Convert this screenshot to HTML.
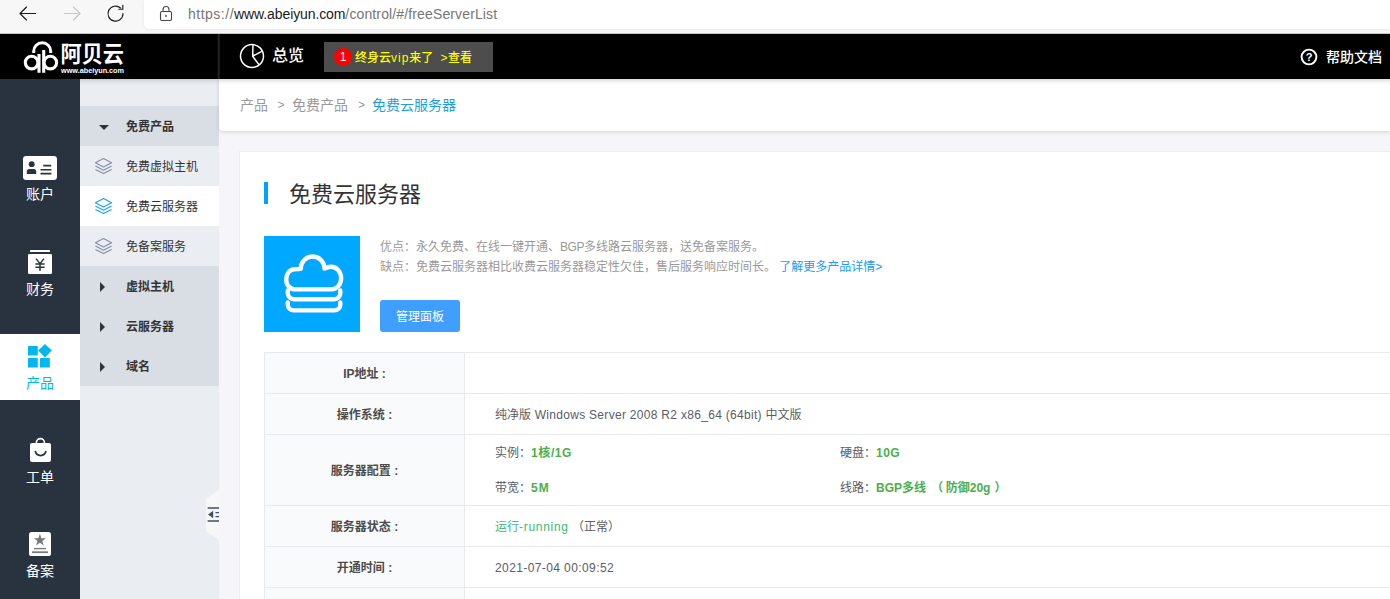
<!DOCTYPE html>
<html lang="zh-CN">
<head>
<meta charset="utf-8">
<title>免费云服务器</title>
<style>
*{box-sizing:border-box;margin:0;padding:0}
html,body{width:1390px;height:599px;overflow:hidden;background:#f5f5fa;
  font-family:"Liberation Sans","Noto Sans CJK SC",sans-serif;color:#333}
body{position:relative}
.abs{position:absolute}
/* browser chrome */
#chrome{left:0;top:0;width:1390px;height:34px;background:#f7f7f7;border-bottom:1px solid #c4c4c4}
#addr{left:144px;top:0;width:1246px;height:29px;background:#fff;border-bottom-left-radius:5px;box-shadow:0 1px 3px rgba(0,0,0,.06)}
#url{left:188px;top:5px;font-size:14px;line-height:18px;color:#767676;white-space:nowrap;letter-spacing:0px}
#url b{font-weight:normal;color:#1a1a1a}
/* header */
#header{left:0;top:34px;width:1390px;height:45px;background:#000}
#hsep{left:217px;top:34px;width:3px;height:45px;background:linear-gradient(90deg,#000,#2a2a2a 60%,#111)}
#ov{left:272px;top:45px;font-size:16px;line-height:22px;color:#fff;white-space:nowrap;font-weight:500}
#notice{left:324px;top:42px;width:169px;height:30px;background:#4d4d4d}
#badge{left:334px;top:48px;width:18px;height:18px;border-radius:9px;background:#f00;color:#fff;font-size:12px;line-height:18px;text-align:center}
#ntext{left:355px;top:49px;font-size:12px;line-height:18px;color:#ffff00;white-space:nowrap;font-weight:500}
#help{left:1326px;top:47px;font-size:14px;line-height:20px;color:#fff;white-space:nowrap;font-weight:500}
/* left dark sidebar */
#side{left:0;top:79px;width:80px;height:520px;background:#29323f}
.sitem{left:0;width:80px;text-align:center;color:#fff;font-size:14px;line-height:18px}
#sactive{left:0;top:334px;width:80px;height:66px;background:#fff}
/* sub sidebar */
#sub{left:80px;top:79px;width:139px;height:520px;background:#eaedf1}
.srow{left:80px;width:139px;height:40px;font-size:12px;line-height:43px;color:#333;white-space:nowrap}
.srow.h{background:#d9dee4;font-weight:bold}
.srow.h span{position:absolute;left:46px;top:0}
.srow.i span{position:absolute;left:46px;top:0}
.srow.on{background:#fff}
.tri-d{position:absolute;left:18.5px;top:18.5px;width:0;height:0;border-left:5px solid transparent;border-right:5px solid transparent;border-top:5.5px solid #333}
.tri-r{position:absolute;left:20px;top:15.5px;width:0;height:0;border-top:5px solid transparent;border-bottom:5px solid transparent;border-left:5px solid #333}
/* breadcrumb */
#crumb{left:219px;top:79px;width:1171px;height:52px;background:#fff;box-shadow:0 1px 4px rgba(0,0,0,.14);border-bottom-left-radius:4px}
#crumbt{left:240px;top:95px;font-size:14px;line-height:20px;color:#999;white-space:nowrap}
#crumbt em{font-style:normal;color:#1e9fd8}
#crumbt .gt{position:absolute;font-size:12px}
/* card */
#card{left:239px;top:151px;width:1151px;height:448px;background:#fff;border-left:1px solid #ebebf0;border-top:1px solid #ebebf0}
#tbar{left:264px;top:182px;width:4px;height:22px;background:#00a2fd}
#title{left:289px;top:180px;font-size:22px;line-height:30px;color:#333;white-space:nowrap}
#pic{left:264px;top:236px;width:96px;height:96px;background:#00a8ff}
.desc{left:380px;font-size:12px;line-height:18px;color:#999;white-space:nowrap}
.desc a{color:#1a9af8;text-decoration:none}
#btn{left:380px;top:300px;width:80px;height:32px;background:#409eff;border-radius:3px;color:#fff;font-size:12px;line-height:34px;text-align:center}
/* table */
.hl{left:264px;width:1126px;height:1px;background:#e9eaee}
#lcol{left:264px;top:353px;width:200px;height:246px;background:#f9fafb;border-left:1px solid #e9eaee}
#vl{left:464px;top:353px;width:1px;height:246px;background:#e9eaee}
.lab{left:265px;width:199px;text-align:center;font-size:12px;line-height:18px;font-weight:bold;color:#4c4c4c;white-space:nowrap}
.val{font-size:12px;line-height:18px;color:#595d66;white-space:nowrap}
.val b{color:#4cae4c}
.g{color:#3cb878}
</style>
</head>
<body>
<!-- browser chrome -->
<div id="chrome" class="abs"></div>
<div id="addr" class="abs"></div>
<svg class="abs" style="left:0;top:0" width="200" height="33" viewBox="0 0 200 33" fill="none" stroke-linecap="round" stroke-linejoin="round">
  <g stroke="#1b1b1b" stroke-width="1.15">
    <path d="M20.5 13.5H35.5M26.5 7L20 13.5L26.5 20"/>
  </g>
  <g stroke="#c6c6c6" stroke-width="1.15">
    <path d="M64.5 13.5H79.5M73.5 7L80 13.5L73.5 20"/>
  </g>
  <g stroke="#1b1b1b" stroke-width="1.15">
    <path d="M123 13.5A7.5 7.5 0 1 1 120.5 8"/>
    <path d="M122.8 5.2V9.2H118.8"/>
  </g>
  <g stroke="#444" stroke-width="1.1">
    <rect x="160.5" y="11.5" width="11" height="9" rx="1.5"/>
    <path d="M163 11.5V9.5a3 3 0 0 1 6 0V11.5"/>
  </g>
  <circle cx="166" cy="16" r="0.9" fill="#444"/>
</svg>
<div id="url" class="abs"><span style="letter-spacing:.5px">https://</span><b style="letter-spacing:-.1px">www.abeiyun.com</b><span style="letter-spacing:.13px">/control/#/freeServerList</span></div>

<!-- header -->
<div id="header" class="abs"></div>
<div id="hsep" class="abs"></div>
<svg class="abs" style="left:0;top:33px" width="217" height="46" viewBox="0 33 217 46" fill="none">
  <g stroke="#fff" stroke-width="3.1">
    <circle cx="31.6" cy="62.6" r="6.3"/>
    <circle cx="50.3" cy="62.6" r="6.3"/>
    <path d="M39 54V72.8M43.7 50V72.8"/>
    <path d="M33.7 53V51.3A8.5 8.5 0 0 1 50.7 51.3V53" stroke-width="3"/>
  </g>
  <text x="60.5" y="62.3" font-family="'Liberation Sans','Noto Sans CJK SC',sans-serif" font-size="22.5" font-weight="700" fill="#fff" textLength="63.5" lengthAdjust="spacingAndGlyphs">阿贝云</text>
  <text x="61" y="72.8" font-family="'Liberation Sans',sans-serif" font-size="6.6" font-weight="bold" fill="#fff" textLength="63" lengthAdjust="spacingAndGlyphs">www.abeiyun.com</text>
</svg>
<svg class="abs" style="left:236px;top:40px" width="32" height="32" viewBox="236 40 32 32" fill="none" stroke="#fff" stroke-width="1.5" stroke-linejoin="round">
  <circle cx="252" cy="56" r="11.5"/>
  <path d="M253 44.5L252.7 56.2L261.8 51.4M252.7 56.2L258.9 64.6"/>
</svg>
<div id="ov" class="abs">总览</div>
<div id="notice" class="abs"></div>
<div id="badge" class="abs">1</div>
<div id="ntext" class="abs">终身云<span style="letter-spacing:1px">vip</span>来了<span style="position:absolute;left:85.5px">&gt;</span><span style="position:absolute;left:93px">查看</span></div>
<svg class="abs" style="left:1300px;top:48px" width="18" height="18" viewBox="0 0 18 18" fill="none">
  <circle cx="9" cy="9" r="7.4" stroke="#fff" stroke-width="1.9"/>
  <text x="9" y="13" text-anchor="middle" font-family="'Liberation Sans',sans-serif" font-size="11" font-weight="bold" fill="#fff">?</text>
</svg>
<div id="help" class="abs">帮助文档</div>

<!-- dark sidebar -->
<div id="side" class="abs"></div>
<div id="sactive" class="abs"></div>
<svg class="abs" style="left:0;top:140px" width="80" height="459" viewBox="0 140 80 459" fill="none">
  <!-- account -->
  <rect x="23" y="156" width="34" height="24" rx="3.2" fill="#fff"/>
  <circle cx="31.7" cy="164.2" r="2.9" fill="#29323f"/>
  <path d="M26.8 174V171.6A2.6 2.6 0 0 1 29.4 169H33.6A2.6 2.6 0 0 1 36.2 171.6V174Z" fill="#29323f"/>
  <path d="M43.3 165.6H51.2M40.5 169.7H51.4M40.5 173.6H51.4" stroke="#29323f" stroke-width="1.6"/>
  <!-- finance -->
  <rect x="30" y="250" width="20" height="2" rx="0.5" fill="#fff"/>
  <rect x="28" y="254" width="24" height="20" rx="1.2" fill="#fff"/>
  <path d="M36 258.6L40 263.6L44 258.6M40 263.6V270.8M35.4 264H44.6M35.4 267.2H44.6" stroke="#29323f" stroke-width="1.5"/>
  <!-- product -->
  <rect x="28" y="346" width="9.8" height="9.6" rx="0.6" fill="#00b7ee"/>
  <rect x="28" y="358" width="9.8" height="9.6" rx="0.6" fill="#00b7ee"/>
  <rect x="40" y="358" width="9.8" height="9.6" rx="0.6" fill="#00b7ee"/>
  <path d="M45 343.9L51.8 350.6L45 357.4L38.2 350.6Z" fill="#00b7ee"/>
  <!-- ticket -->
  <rect x="30" y="443" width="21" height="19" rx="2" fill="#fff"/>
  <path d="M36.4 444V442.6A4 4 0 0 1 44.4 442.6V444" stroke="#fff" stroke-width="1.6"/>
  <path d="M35.4 451.6A5.4 5.4 0 0 0 45.8 451.6" stroke="#29323f" stroke-width="1.8" stroke-linecap="round"/>
  <!-- record -->
  <rect x="29" y="532" width="22" height="24" rx="2.6" fill="#fff"/>
  <path d="M39.9 533.8L41.4 538.2H46L42.3 541L43.7 545.5L39.9 542.8L36.1 545.5L37.5 541L33.8 538.2H38.4Z" fill="#7a7a7a"/>
  <path d="M34 548.6H46" stroke="#7a7a7a" stroke-width="1.4"/>
  <path d="M32 552.2H48" stroke="#7a7a7a" stroke-width="1.8"/>
</svg>
<div class="abs sitem" style="top:185px">账户</div>
<div class="abs sitem" style="top:280px">财务</div>
<div class="abs sitem" style="top:374px;color:#00b7ee">产品</div>
<div class="abs sitem" style="top:468px">工单</div>
<div class="abs sitem" style="top:562px">备案</div>

<!-- sub sidebar -->
<div id="sub" class="abs"></div>
<div class="abs srow h" style="top:106px"><i class="tri-d"></i><span>免费产品</span></div>
<div class="abs srow i" style="top:146px"><span>免费虚拟主机</span></div>
<div class="abs srow i on" style="top:186px"><span>免费云服务器</span></div>
<div class="abs srow i" style="top:226px"><span>免备案服务</span></div>
<svg class="abs" style="left:94px;top:156.5px" width="19" height="19" viewBox="0 0 19 19" fill="none" stroke="#8291a5" stroke-width="1.15" stroke-linejoin="round"><path d="M9.5 1.5L17.6 5.7L9.5 9.9L1.4 5.7Z"/><path d="M1.4 9.1L9.5 13.3L17.6 9.1"/><path d="M1.4 12.4L9.5 16.6L17.6 12.4"/></svg>
<svg class="abs" style="left:94px;top:196.5px" width="19" height="19" viewBox="0 0 19 19" fill="none" stroke="#1ca1f2" stroke-width="1.15" stroke-linejoin="round"><path d="M9.5 1.5L17.6 5.7L9.5 9.9L1.4 5.7Z"/><path d="M1.4 9.1L9.5 13.3L17.6 9.1"/><path d="M1.4 12.4L9.5 16.6L17.6 12.4"/></svg>
<svg class="abs" style="left:94px;top:236.5px" width="19" height="19" viewBox="0 0 19 19" fill="none" stroke="#8291a5" stroke-width="1.15" stroke-linejoin="round"><path d="M9.5 1.5L17.6 5.7L9.5 9.9L1.4 5.7Z"/><path d="M1.4 9.1L9.5 13.3L17.6 9.1"/><path d="M1.4 12.4L9.5 16.6L17.6 12.4"/></svg>
<div class="abs srow h" style="top:266px"><i class="tri-r"></i><span>虚拟主机</span></div>
<div class="abs srow h" style="top:306px"><i class="tri-r"></i><span>云服务器</span></div>
<div class="abs srow h" style="top:346px"><i class="tri-r"></i><span>域名</span></div>

<svg class="abs" style="left:200px;top:485px" width="19" height="60" viewBox="200 485 19 60" fill="none">
  <path d="M219 490L206 499V531L219 540Z" fill="#f7f7f8"/>
  <path d="M207.6 508H219M207.6 521H219" stroke="#435069" stroke-width="1.6"/>
  <path d="M215.5 512.6H219M215.5 516.6H219" stroke="#435069" stroke-width="1.4"/>
  <path d="M213.2 510.8V518.2L208 514.5Z" fill="#435069"/>
</svg>
<!-- breadcrumb -->
<div id="crumb" class="abs"></div>
<div class="abs" style="left:80px;top:79px;width:1310px;height:6px;background:linear-gradient(rgba(0,0,0,.13),rgba(0,0,0,.04) 55%,rgba(0,0,0,0))"></div>
<div id="crumbt" class="abs">产品<span class="gt" style="left:37.5px">&gt;</span><span style="position:absolute;left:52px">免费产品</span><span class="gt" style="left:118px">&gt;</span><em style="position:absolute;left:132px">免费云服务器</em></div>

<!-- card -->
<div id="card" class="abs"></div>
<div id="tbar" class="abs"></div>
<div id="title" class="abs">免费云服务器</div>
<div id="pic" class="abs"></div>
<svg class="abs" style="left:264px;top:236px" width="96" height="96" viewBox="0 0 96 96" fill="none" stroke="#fff" stroke-width="4.4" stroke-linejoin="round" stroke-linecap="round">
  <path d="M31 53.4C26 53.4 22.2 49 22.2 43.4C22.2 37.6 26 33.2 30.5 33.2C32.8 33.2 34.8 33.2 36.7 32.8A11.9 12.2 0 0 1 60.5 32.6C62.6 31.4 64.8 30.8 67.2 30.8C72.6 30.8 77.1 36 77.1 42.3C77.1 48.5 72.8 53.4 67.5 53.4Z"/>
  <path d="M23.8 54.5V57.2A6 6 0 0 0 29.8 63.2H70.3A6 6 0 0 0 76.3 57.2V54.5"/>
  <path d="M23.8 66.5V68.4A6 6 0 0 0 29.8 74.4H70.3A6 6 0 0 0 76.3 68.4V66.5"/>
</svg>
<div class="abs desc" style="top:238px">优点：永久免费、在线一键开通、<span style="letter-spacing:-.45px">BGP</span>多线路云服务器，送免备案服务。</div>
<div class="abs desc" style="top:258px">缺点：免费云服务器相比收费云服务器稳定性欠佳，售后服务响应时间长。 <a>了解更多产品详情&gt;</a></div>
<div id="btn" class="abs">管理面板</div>

<!-- table -->
<div id="lcol" class="abs"></div>
<div id="vl" class="abs"></div>
<div class="abs hl" style="top:352px"></div>
<div class="abs hl" style="top:393px"></div>
<div class="abs hl" style="top:434px"></div>
<div class="abs hl" style="top:505px"></div>
<div class="abs hl" style="top:546px"></div>
<div class="abs hl" style="top:587px"></div>
<div class="abs lab" style="top:365px">IP地址 :</div>
<div class="abs lab" style="top:406px">操作系统 :</div>
<div class="abs lab" style="top:462px">服务器配置 :</div>
<div class="abs lab" style="top:518px">服务器状态 :</div>
<div class="abs lab" style="top:559px">开通时间 :</div>
<div class="abs val" style="left:495px;top:406px">纯净版<span style="letter-spacing:.3px"> Windows Server 2008 R2 x86_64 (64bit) </span>中文版</div>
<div class="abs val" style="left:495px;top:444px">实例：<b style="letter-spacing:.6px">1核/1G</b></div>
<div class="abs val" style="left:840px;top:444px">硬盘：<b style="letter-spacing:.5px">10G</b></div>
<div class="abs val" style="left:495px;top:479px">带宽：<b style="letter-spacing:1px">5M</b></div>
<div class="abs val" style="left:840px;top:479px">线路：<b>BGP多线 <span style="margin:0 2.4px 0 2px">（</span>防御20g<span style="margin-left:4px">）</span></b></div>
<div class="abs val" style="left:495px;top:518px"><span class="g">运行<span style="letter-spacing:.7px">-running</span></span> （正常）</div>
<div class="abs val" style="left:495px;top:559px;letter-spacing:.4px">2021-07-04 00:09:52</div>
</body>
</html>
